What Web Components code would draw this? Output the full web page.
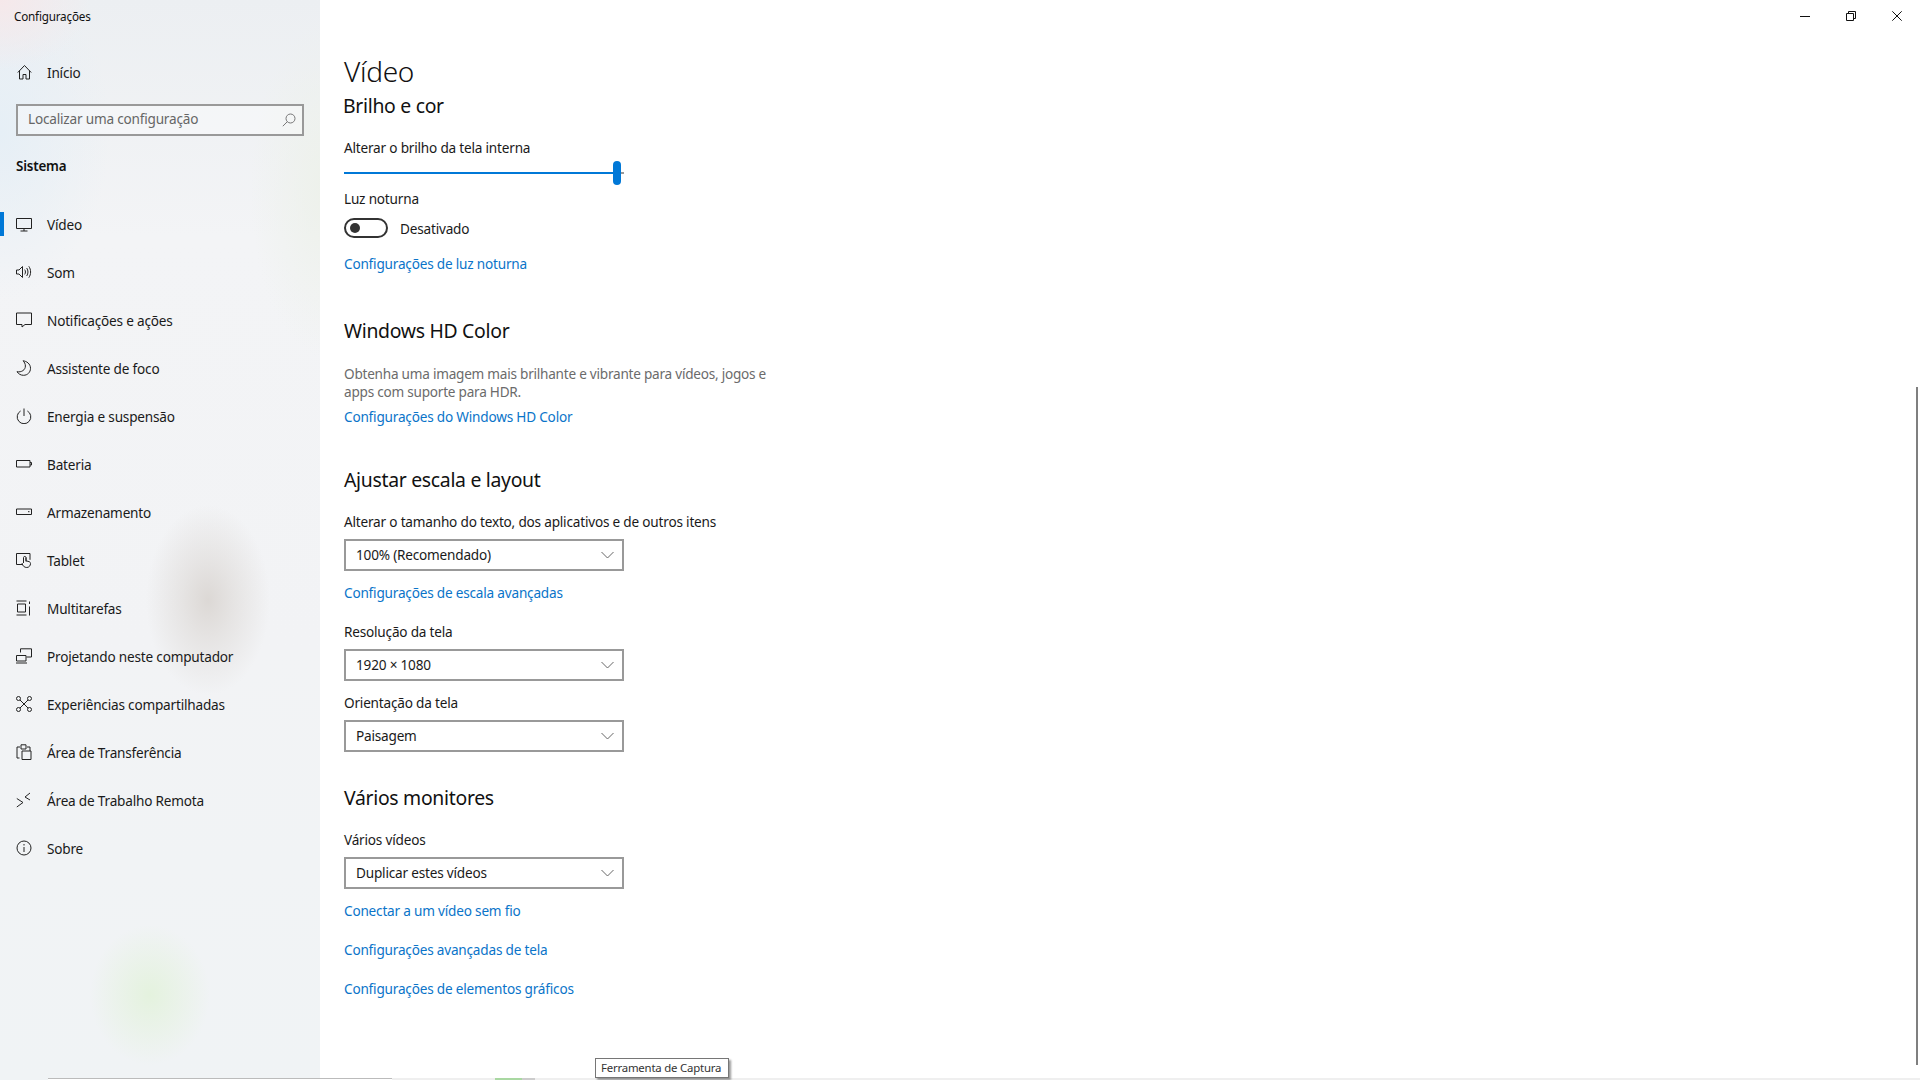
<!DOCTYPE html>
<html lang="pt-BR">
<head>
<meta charset="utf-8">
<title>Configurações</title>
<style>
html, body { margin: 0; height: 100%; background: #fff; overflow: hidden; }
body { font-family: "Noto Sans", "Open Sans", sans-serif; font-size: 13.6px; letter-spacing: -.2px; color: #1a1a1a; }
</style>
</head>
<body>
<settings-app>
	<settings-sidebar slot="sidebar">
		<nav-item icon="home" slot="home">Início</nav-item>
		<search-box placeholder="Localizar uma configuração" slot="search"></search-box>
		<nav-item icon="video" active>Vídeo</nav-item>
		<nav-item icon="sound">Som</nav-item>
		<nav-item icon="notify">Notificações e ações</nav-item>
		<nav-item icon="moon">Assistente de foco</nav-item>
		<nav-item icon="power">Energia e suspensão</nav-item>
		<nav-item icon="battery">Bateria</nav-item>
		<nav-item icon="storage">Armazenamento</nav-item>
		<nav-item icon="tablet">Tablet</nav-item>
		<nav-item icon="multi">Multitarefas</nav-item>
		<nav-item icon="project">Projetando neste computador</nav-item>
		<nav-item icon="shared">Experiências compartilhadas</nav-item>
		<nav-item icon="clip">Área de Transferência</nav-item>
		<nav-item icon="remote">Área de Trabalho Remota</nav-item>
		<nav-item icon="about">Sobre</nav-item>
	</settings-sidebar>

	<page-title>Vídeo</page-title>
	<section-title style="margin:1px 0 0 -1px">Brilho e cor</section-title>
	<field-label style="margin-top:18px">Alterar o brilho da tela interna</field-label>
	<brightness-slider style="margin-top:3px"></brightness-slider>
	<field-label style="margin-top:4px">Luz noturna</field-label>
	<toggle-switch style="margin-top:9px">Desativado</toggle-switch>
	<settings-link style="margin-top:16px">Configurações de luz noturna</settings-link>

	<section-title style="margin-top:43px">Windows HD Color</section-title>
	<help-text style="margin-top:20px">Obtenha uma imagem mais brilhante e vibrante para vídeos, jogos e<br>apps com suporte para HDR.</help-text>
	<settings-link style="margin-top:6px">Configurações do Windows HD Color</settings-link>

	<section-title style="margin-top:39px">Ajustar escala e layout</section-title>
	<field-label style="margin-top:18px">Alterar o tamanho do texto, dos aplicativos e de outros itens</field-label>
	<combo-box style="margin-top:7px">100% (Recomendado)</combo-box>
	<settings-link style="margin-top:12px">Configurações de escala avançadas</settings-link>
	<field-label style="margin-top:19px">Resolução da tela</field-label>
	<combo-box style="margin-top:7px">1920 × 1080</combo-box>
	<field-label style="margin-top:12px">Orientação da tela</field-label>
	<combo-box style="margin-top:7px">Paisagem</combo-box>

	<section-title style="margin-top:32px">Vários monitores</section-title>
	<field-label style="margin-top:18px">Vários vídeos</field-label>
	<combo-box style="margin-top:7px">Duplicar estes vídeos</combo-box>
	<settings-link style="margin-top:12px">Conectar a um vídeo sem fio</settings-link>
	<settings-link style="margin-top:19px">Configurações avançadas de tela</settings-link>
	<settings-link style="margin-top:19px">Configurações de elementos gráficos</settings-link>

	<caption-buttons slot="overlay"></caption-buttons>
	<desktop-edge slot="overlay"></desktop-edge>
</settings-app>

<script>
const ICONS = {
	home: '<path d="M1.800 8.500 8.500 1.500l6.700 7M3.500 6.500v8.500h3.500v-4.500h3v4.500h3.500V6.500"/>',
	video: '<path d="M.5 2.500h15v10H.5zM8 12.500v2.500M4.500 15h7"/>',
	sound: '<path d="M.5 6h2.500l3.500-3.500v11L3 10H.5zM8.700 5.600c1 1.400 1 3.400 0 4.800M10.700 4c1.700 2.500 1.700 5.500 0 8M12.800 2.300c2.400 3.400 2.400 8 0 11.400"/>',
	notify: '<path d="M.5 1h15v11.500H9L6 15v-2.500H.5z"/>',
	moon: '<path d="M7 .8c3.500.300 7.500 3 7.500 7.500 0 4-3 7-7 7-2.700 0-5-1.300-6.500-3.600 4.500.8 8.400-1.700 8.400-5.700C9.400 3.800 8.300 2 7 .8z"/>',
	power: '<path d="M8 .5v7.500M4.600 3a6.800 6.800 0 1 0 6.800 0"/>',
	battery: '<path d="M.5 4.500h13.500v6.500H.5zM14 6.500h1.500v2.500H14"/>',
	storage: '<path d="M.5 5h15v5.500H.5zM12 7.700h1.500"/>',
	tablet: '<path d="M6.500 12.500H.5V1.500h13.500v6.300M7.500 11V5.500c0-1.400 2.500-1.400 2.500 0v3.300l3 .8c1 .3 1.500 1 1.500 2 0 2-1.500 3.900-3.700 3.900-2.300 0-4.300-1.500-4.800-4.500M10 5.500v4"/>',
	multi: '<path d="M.5 1h10M.5 15h10M1.500 4h8v8h-8zM13.500 1.500v2.500M13.500 6.500v9"/>',
	project: '<path d="M4.500 4.500V.8h11v8.200h-5M.5 7.500h9.500v5.500H.5zM0 15h11"/>',
	shared: '<circle cx="2.500" cy="2.500" r="2"/><circle cx="13.500" cy="2.500" r="2"/><circle cx="2.500" cy="13.500" r="2"/><circle cx="13.500" cy="13.500" r="2"/><path d="M4 4l8 8M12 4l-8 8"/>',
	clip: '<path d="M3.500 14H1V3h3M11 3h3v4M5 .8h5V5H5zM6 7h9v8.500H6z"/>',
	remote: '<path d="M.8 6.500 7 10.500l-6.200 4.500M14 1 9 5l5 3"/>',
	about: '<circle cx="8" cy="8" r="7"/><path d="M8 7v5M8 4v1.500"/>'
};

function define(name, style, html, init) {
	customElements.define(name, class extends HTMLElement {
		constructor() {
			super();
			let shadowRoot = this.attachShadow({mode: 'open'});
			shadowRoot.innerHTML = `<style>${style}</style>${html}`;
			if (init) init(this, shadowRoot);
		}
	});
}

define('settings-app', `
	:host { display: grid; grid-template-columns: 320px 1fr; height: 1080px; position: relative; }
	main { display: flex; flex-direction: column; padding: 51px 0 0 24px; }
`, `<slot name="sidebar"></slot><main><slot></slot></main><slot name="overlay"></slot>`);

define('settings-sidebar', `
	:host {
		display: block; height: 1080px; box-sizing: border-box;
		background:
			radial-gradient(ellipse 62px 95px at 208px 600px, #dcd8d5 0%, rgba(220,216,213,.55) 42%, rgba(220,216,213,0) 100%),
			radial-gradient(ellipse 60px 70px at 150px 995px, #e4f2de 0%, rgba(228,242,222,.5) 50%, rgba(228,242,222,0) 100%),
			radial-gradient(ellipse 80px 170px at 330px 190px, #edf1ea 0%, rgba(237,241,234,0) 100%),
			radial-gradient(ellipse 90px 70px at 0 0, #f6e8ea 0%, rgba(246,232,234,0) 100%),
			radial-gradient(ellipse 110px 170px at 0 130px, #e6eff6 0%, rgba(230,239,246,0) 100%),
			linear-gradient(180deg, #eceff2 0, #f3f4f6 22%, #f2f3f5 60%, #f0f3f5 100%);
	}
	header { height: 33px; line-height: 32px; padding-left: 14px; font-size: 11.700px; letter-spacing: -.2px; color: #111; }
	.home { display: block; margin-top: 16px; }
	.search { display: block; margin: 7px 0 0 16px; }
	h2 { margin: 20px 0 25px 16px; font-size: 13.400px; line-height: 20px; font-weight: 600; color: #111; }
`, `<header>Configurações</header>
	<div class="home"><slot name="home"></slot></div>
	<div class="search"><slot name="search"></slot></div>
	<h2>Sistema</h2>
	<slot></slot>`);

define('nav-item', `
	:host { display: flex; align-items: center; height: 48px; position: relative; color: #1a1a1a; }
	:host([active])::before { content: ""; position: absolute; left: 0; top: 11px; width: 4px; height: 24px; background: #0078d7; }
	svg { width: 16px; height: 16px; margin: -3px 15px 0 16px; fill: none; stroke: #222; stroke-width: 1; flex: none; }
	span { margin-top: -2px; }
`, `<svg viewBox="0 0 16 16"></svg><span><slot></slot></span>`, (el, root) => {
	root.querySelector('svg').innerHTML = ICONS[el.getAttribute('icon')] || '';
});

define('search-box', `
	:host { display: flex; align-items: center; justify-content: space-between; box-sizing: border-box; width: 288px; height: 32px; border: 2px solid #999; padding: 0 6px 0 10px; color: #666; background: rgba(255,255,255,.35); }
	span { margin-top: -3px; }
	svg { width: 14px; height: 14px; fill: none; stroke: #777; stroke-width: 1; }
`, `<span></span><svg viewBox="0 0 14 14"><circle cx="8.500" cy="5.500" r="4.500"/><path d="M5.300 8.700 .8 13.200"/></svg>`, (el, root) => {
	root.querySelector('span').textContent = el.getAttribute('placeholder');
});

define('page-title', `
	:host { display: block; font-size: 28px; line-height: 40px; font-weight: 300; letter-spacing: -.3px; color: #111; }
`, `<slot></slot>`);

define('section-title', `
	:host { display: block; font-size: 19.400px; line-height: 28px; letter-spacing: -.3px; color: #111; }
`, `<slot></slot>`);

define('field-label', `
	:host { display: block; line-height: 20px; color: #1a1a1a; }
`, `<slot></slot>`);

define('help-text', `
	:host { display: block; line-height: 18px; letter-spacing: -.24px; color: #6b6b6b; }
`, `<slot></slot>`);

define('settings-link', `
	:host { display: block; line-height: 20px; color: #0a74c9; }
`, `<slot></slot>`);

define('brightness-slider', `
	:host { display: flex; align-items: center; width: 280px; height: 24px; }
	.fill { width: 269px; height: 2px; background: #0078d7; }
	.thumb { width: 8px; height: 24px; border-radius: 4px; background: #0078d7; flex: none; }
	.rest { width: 3px; height: 2px; background: #999; }
`, `<div class="fill"></div><div class="thumb"></div><div class="rest"></div>`);

define('toggle-switch', `
	:host { display: flex; align-items: center; height: 20px; }
	.track { box-sizing: border-box; width: 44px; height: 20px; border: 2px solid #333; border-radius: 10px; padding-left: 4px; display: flex; align-items: center; margin-right: 12px; }
	.knob { width: 10px; height: 10px; border-radius: 50%; background: #333; }
`, `<div class="track"><div class="knob"></div></div><span><slot></slot></span>`);

define('combo-box', `
	:host { display: flex; align-items: center; justify-content: space-between; box-sizing: border-box; width: 280px; height: 32px; border: 2px solid #999; padding: 0 8px 0 10px; color: #1a1a1a; }
	span { margin-top: -1px; }
	svg { width: 13px; height: 8px; fill: none; stroke: #666; stroke-width: 1; }
`, `<span><slot></slot></span><svg viewBox="0 0 13 8"><path d="M.5 1 6.500 7l6-6"/></svg>`);

define('caption-buttons', `
	:host { position: absolute; top: 0; right: 0; display: flex; }
	div { width: 46px; height: 32px; display: flex; align-items: center; justify-content: center; }
	svg { width: 10px; height: 10px; fill: none; stroke: #111; stroke-width: 1; }
`, `<div><svg viewBox="0 0 10 10"><path d="M0 5.500h10"/></svg></div>
	<div><svg viewBox="0 0 10 10"><path d="M.5 2.500h7v7h-7zM2.500 2.500v-2h7v7h-2"/></svg></div>
	<div><svg viewBox="0 0 10 10"><path d="M.3.300l9.400 9.400M9.700.300.3 9.700"/></svg></div>`);

/* scrollbar, tooltip and the taskbar peeking through at the bottom edge */
define('desktop-edge', `
	:host { display: contents; }
	.scroll { position: absolute; left: 1916px; top: 387px; width: 2px; height: 678px; background: #7f7f7f; }
	.tip { position: absolute; left: 595px; top: 1058px; width: 134px; height: 20px; box-sizing: border-box; padding: 0 5px; border: 1px solid #767676; background: #fff; font-size: 11.400px; line-height: 17px; letter-spacing: -.2px; white-space: nowrap; color: #333; box-shadow: 2px 2px 2px rgba(0,0,0,.4); z-index: 2; }
	.strip { position: absolute; left: 48px; right: 0; top: 1078px; height: 2px; display: flex; background: #efefef; }
	.strip i { display: block; height: 2px; }
`, `<div class="scroll"></div>
	<div class="tip">Ferramenta de Captura</div>
	<div class="strip">
		<i style="width:344px;background:#fff;border-top:1px solid #bbb;height:1px"></i>
		<i style="width:103px"></i>
		<i style="width:27px;background:#a9d8a2"></i>
		<i style="width:13px;background:#ccc"></i>
	</div>`);
</script>
</body>
</html>
